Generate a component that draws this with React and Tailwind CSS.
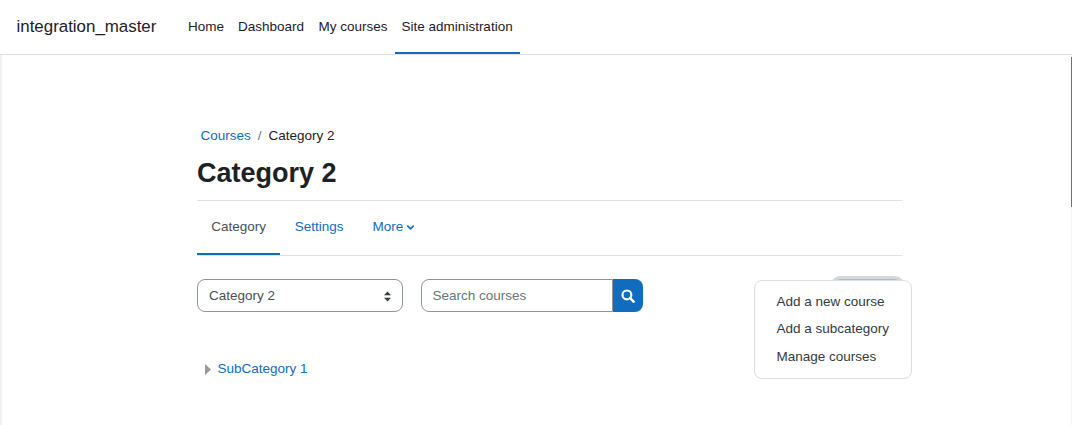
import React from "react";
import { ChevronDown } from "lucide-react";

export default function App() {
  return (
    <div className="relative h-[425px] w-[1072px] overflow-hidden bg-white font-['Liberation_Sans',Arial,sans-serif] text-[13.5px] text-[#1d2125]">
      {/* navbar */}
      <nav className="flex h-[55px] items-stretch border-b border-[#dee2e6] pl-[16.5px]">
        <a className="mr-[24.5px] flex items-center pb-px text-[16.9px]">integration_master</a>
        <ul className="flex">
          <li className="flex items-center px-[7px]">Home</li>
          <li className="flex items-center px-[7px]">Dashboard</li>
          <li className="ml-[0.6px] flex items-center px-[7px]">My courses</li>
          <li className="flex items-center border-b-2 border-[#0f6cbf] px-[7px] pt-[2px]">Site administration</li>
        </ul>
      </nav>

      {/* page body */}
      <div className="flex h-[370px] border-l-2 border-[#f2f2f2]">
        <main className="ml-[195px] w-[705px] pt-[72px]">
          <ol className="flex items-center pl-[3.5px] leading-[18px]">
            <li className="text-[#0f6cbf]">Courses</li>
            <li className="px-[7px] text-[#6a737b]">/</li>
            <li>Category 2</li>
          </ol>

          <h2 className="mt-[10px] text-[27px] font-bold leading-[36px] text-[#1d2125]">Category 2</h2>

          <div className="mt-[9px] flex h-[56px] border-y border-[#dee2e6]">
            <div className="flex items-center border-b-2 border-[#0f6cbf] px-[14.25px] pt-px text-[#495057]">Category</div>
            <div className="flex items-center px-[14.5px] pb-[1px] text-[#0f6cbf]">Settings</div>
            <div className="flex items-center gap-[2px] px-[14.5px] pb-[1px] text-[#0f6cbf]">
              More
              <ChevronDown size={11} strokeWidth={3.5} />
            </div>
          </div>

          <div className="mt-[23px] flex items-center">
            <div className="flex h-[33px] w-[206px] items-center justify-between rounded-lg border border-[#8f959e] pl-[11px] pr-[10px] pt-[1px] text-[#495057]">
              Category 2
              <svg width="9" height="11" viewBox="0 0 9 11" fill="#343a40">
                <path d="M4.5 0.5 8 4.3H1z" />
                <path d="M4.5 10.5 1 6.7h7z" />
              </svg>
            </div>
            <div className="ml-[18px] flex h-[33px] w-[192px] items-center rounded-l-lg border border-[#8f959e] pl-[10.5px] pt-[1px] text-[#6a737b]">
              Search courses
            </div>
            <button className="flex h-[33px] w-[30px] items-center justify-center rounded-r-lg bg-[#0f6cbf] text-white">
              <svg width="14" height="14" viewBox="0 0 14 14" fill="none" stroke="currentColor">
                <circle cx="5.9" cy="5.9" r="4.4" strokeWidth="2.2" />
                <path d="M9.2 9.2 12.6 12.6" strokeWidth="2.6" strokeLinecap="round" />
              </svg>
            </button>
          </div>

          <div className="mt-[48px] flex items-center pl-[7.5px] leading-[18px]">
            <svg width="6" height="11" viewBox="0 0 6 11" fill="#999999">
              <path d="M0 0l6 5.5L0 11z" />
            </svg>
            <span className="ml-[7px] text-[#0f6cbf]">SubCategory 1</span>
          </div>
        </main>
      </div>

      {/* fake scrollbar */}
      <div className="absolute right-0 top-[55px] h-[370px] w-px bg-[#f5f5f5]" />
      <div className="absolute right-0 top-[57px] h-[150px] w-px bg-[#6a6f78]" />

      {/* focused button behind the menu */}
      <div className="absolute left-[833px] top-[279px] h-[33px] w-[69px] rounded-lg bg-[#b1bbc4] ring-[3px] ring-[#d5d8db]" />

      {/* dropdown menu */}
      <div className="absolute left-[754px] top-[280px] flex h-[99px] w-[158px] flex-col rounded-lg border border-[#dcdfe2] bg-white pl-[21.5px] pt-[7px] text-[#343a40]">
        <a className="leading-[27px]">Add a new course</a>
        <a className="leading-[27px]">Add a subcategory</a>
        <a className="mt-px leading-[27px]">Manage courses</a>
      </div>
    </div>
  );
}
